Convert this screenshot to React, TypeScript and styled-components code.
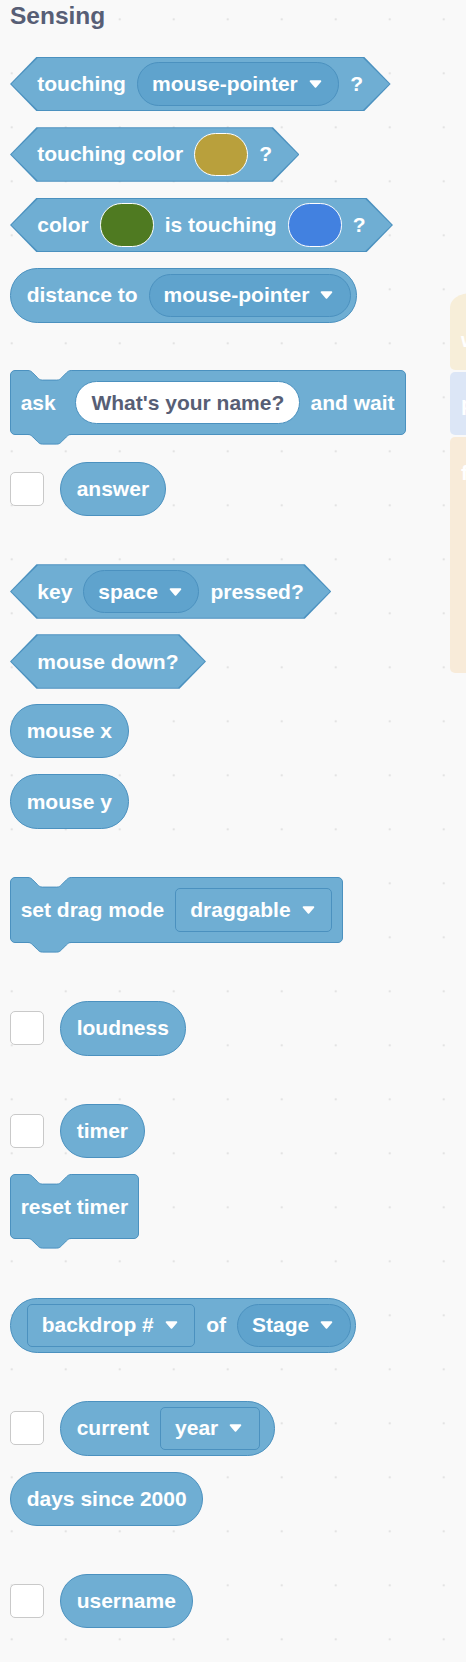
import React from 'react'
import styled, { createGlobalStyle } from 'styled-components'

const FILL = '#6faed3'
const EDGE = '#4b91bf'
const FIELD = '#5fa3cd'
const INK = '#575e75'
const PAPER = '#f9f9f9'

const GlobalStyle = createGlobalStyle`
  html, body {
    margin: 0;
    padding: 0;
    overflow: hidden;
  }
  body {
    background-color: ${PAPER};
    background-image: radial-gradient(circle, #e3e3e3 1px, transparent 1.6px);
    background-size: 54px 54px;
    background-position: -15.3px -7.7px;
    font-family: 'Liberation Sans', Arial, sans-serif;
  }
`

const Palette = styled.div`
  display: flex;
  flex-direction: column;
  align-items: flex-start;
  padding: 0 0 30px 10px;
`

const Heading = styled.h2`
  margin: 4px 0 0;
  font-size: 24.5px;
  line-height: 24.5px;
  font-weight: 700;
  color: ${INK};
`

const Row = styled.div<{ $gap: number }>`
  display: flex;
  align-items: center;
  gap: 16px;
  margin-top: ${({ $gap }) => $gap}px;
`

const blockText = `
  color: #fff;
  font-size: 21px;
  font-weight: 700;
  white-space: nowrap;
`

const Hexagon = styled.div`
  position: relative;
  isolation: isolate;
  display: inline-flex;
  align-items: center;
  gap: 11px;
  height: 54.5px;
  padding: 0 27.5px 0 27.3px;
  ${blockText}

  &::before,
  &::after {
    content: '';
    position: absolute;
    z-index: -1;
    clip-path: polygon(0 50%, 26.5px 0, calc(100% - 26.5px) 0, 100% 50%, calc(100% - 26.5px) 100%, 26.5px 100%);
  }
  &::before {
    inset: 0;
    background: ${EDGE};
  }
  &::after {
    inset: 1px 1.4px;
    background: ${FILL};
  }
`

const Reporter = styled.div<{ $right?: number }>`
  display: inline-flex;
  align-items: center;
  gap: 11px;
  box-sizing: border-box;
  height: 54.5px;
  padding: 0 ${({ $right }) => $right ?? 15.7}px 0 15.7px;
  border: 1px solid ${EDGE};
  border-radius: 27.25px;
  background: ${FILL};
  ${blockText}
`

const Stack = styled.div`
  position: relative;
  display: inline-flex;
  align-items: center;
  gap: 11px;
  box-sizing: border-box;
  height: 65.4px;
  padding: 0 10px 0 9.7px;
  border: 1px solid ${EDGE};
  border-radius: 5px;
  background: ${FILL};
  ${blockText}
`

const Notch = styled.svg`
  position: absolute;
  left: 17.3px;
  top: -1px;
  overflow: visible;
`

const Tab = styled.svg`
  position: absolute;
  left: 17.3px;
  top: calc(100% - 1px);
  overflow: visible;
`

const Menu = styled.span<{ $shape: 'round' | 'square' }>`
  display: inline-flex;
  align-items: center;
  gap: 11px;
  box-sizing: border-box;
  height: 43.5px;
  padding: 0 16.5px 0 14px;
  border: 1px solid ${EDGE};
  border-radius: ${({ $shape }) => ($shape === 'round' ? '21.75px' : '5px')};
  background: ${({ $shape }) => ($shape === 'round' ? FIELD : FILL)};
`

const TextField = styled.span<{ $lead?: number }>`
  display: inline-flex;
  align-items: center;
  box-sizing: border-box;
  height: 43.5px;
  margin-left: ${({ $lead }) => $lead ?? 0}px;
  padding: 0 14.3px 0 15.4px;
  border: 1px solid ${EDGE};
  border-radius: 21.75px;
  background: #fff;
  color: ${INK};
`

const Swatch = styled.span<{ $color: string }>`
  display: inline-block;
  box-sizing: border-box;
  width: 54px;
  height: 43.5px;
  border: 1.5px solid #fff;
  border-radius: 21.75px;
  background: ${({ $color }) => $color};
`

const Checkbox = styled.span`
  display: inline-block;
  box-sizing: border-box;
  width: 34px;
  height: 34px;
  border: 1.5px solid #c9c9c9;
  border-radius: 5px;
  background: #fff;
`

const Workspace = styled.div`
  position: absolute;
  left: 450px;
  top: 293px;
  display: flex;
  flex-direction: column;
  gap: 2px;
  width: 200px;
`

const Ghost = styled.div<{ $color: string; $height: number; $top: number; $hat?: boolean }>`
  box-sizing: border-box;
  height: ${({ $height }) => $height}px;
  padding: ${({ $top }) => $top}px 0 0 11px;
  border-radius: ${({ $hat }) => ($hat ? '22px 0 0 5px / 14px 0 0 5px' : '5px 0 0 5px')};
  background: ${({ $color }) => $color};
  color: #fff;
  font-size: 21px;
  line-height: 24px;
  font-weight: 700;
  white-space: nowrap;
`

const Arrow = () => (
  <svg width="13" height="8" viewBox="0 0 13 8">
    <path d="M1.6 1.2 H11.4 L6.5 6.8 Z" fill="#fff" stroke="#fff" strokeWidth="1.8" strokeLinejoin="round" />
  </svg>
)

const notchPath = 'c2.4 0 3.6 1.2 4.8 2.4 l4.8 4.8 c1.2 1.2 2.4 2.4 4.8 2.4 h14.4 c2.4 0 3.6 -1.2 4.8 -2.4 l4.8 -4.8 c1.2 -1.2 2.4 -2.4 4.8 -2.4'

const StackBlock = ({ children }: { children: React.ReactNode }) => (
  <Stack>
    <Notch width="43.2" height="11">
      <path d={`M0 0 L0 0.5 ${notchPath} L43.2 0 Z`} fill={PAPER} />
      <path d={`M0 0.5 ${notchPath}`} fill="none" stroke={EDGE} strokeWidth="1" />
    </Notch>
    {children}
    <Tab width="43.2" height="13">
      <path d={`M0 0 L0 1.5 ${notchPath} L43.2 0 Z`} fill={FILL} />
      <path d={`M0 1.5 ${notchPath}`} fill="none" stroke={EDGE} strokeWidth="1" />
    </Tab>
  </Stack>
)

const Dropdown = ({ label, shape }: { label: string; shape: 'round' | 'square' }) => (
  <Menu $shape={shape}>
    {label}
    <Arrow />
  </Menu>
)

const App = () => {
  return (
    <>
      <GlobalStyle />
      <Palette>
        <Heading>Sensing</Heading>

        <Row $gap={28.2}>
          <Hexagon>
            touching
            <Dropdown label='mouse-pointer' shape='round' />?
          </Hexagon>
        </Row>
        <Row $gap={16}>
          <Hexagon>
            touching color
            <Swatch $color='#b9a03c' />?
          </Hexagon>
        </Row>
        <Row $gap={16}>
          <Hexagon>
            color
            <Swatch $color='#4f7a21' />
            is touching
            <Swatch $color='#4281e0' />?
          </Hexagon>
        </Row>
        <Row $gap={16}>
          <Reporter $right={4.7}>
            distance to
            <Dropdown label='mouse-pointer' shape='round' />
          </Reporter>
        </Row>

        <Row $gap={47.3}>
          <StackBlock>
            ask
            <TextField $lead={8.3}>What's your name?</TextField>
            and wait
          </StackBlock>
        </Row>
        <Row $gap={26.3}>
          <Checkbox />
          <Reporter>answer</Reporter>
        </Row>

        <Row $gap={48.1}>
          <Hexagon>
            key
            <Dropdown label='space' shape='round' />
            pressed?
          </Hexagon>
        </Row>
        <Row $gap={15.5}>
          <Hexagon>mouse down?</Hexagon>
        </Row>
        <Row $gap={15.2}>
          <Reporter>mouse x</Reporter>
        </Row>
        <Row $gap={16}>
          <Reporter>mouse y</Reporter>
        </Row>

        <Row $gap={48.3}>
          <StackBlock>
            set drag mode
            <Dropdown label='draggable' shape='square' />
          </StackBlock>
        </Row>

        <Row $gap={58.6}>
          <Checkbox />
          <Reporter>loudness</Reporter>
        </Row>

        <Row $gap={48.2}>
          <Checkbox />
          <Reporter>timer</Reporter>
        </Row>
        <Row $gap={15.5}>
          <StackBlock>reset timer</StackBlock>
        </Row>

        <Row $gap={58.9}>
          <Reporter $right={4.6}>
            <Dropdown label='backdrop #' shape='square' />
            of
            <Dropdown label='Stage' shape='round' />
          </Reporter>
        </Row>

        <Row $gap={48.5}>
          <Checkbox />
          <Reporter $right={14.6}>
            current
            <Dropdown label='year' shape='square' />
          </Reporter>
        </Row>
        <Row $gap={15.9}>
          <Reporter>days since 2000</Reporter>
        </Row>

        <Row $gap={47.8}>
          <Checkbox />
          <Reporter>username</Reporter>
        </Row>
      </Palette>

      <Workspace>
        <Ghost $color='#f7eed9' $height={77} $top={34.6} $hat>when clicked</Ghost>
        <Ghost $color='#dce6f6' $height={63} $top={20}>point in direction</Ghost>
        <Ghost $color='#f8ebd9' $height={236} $top={24}>forever</Ghost>
      </Workspace>
    </>
  )
}

export default App
